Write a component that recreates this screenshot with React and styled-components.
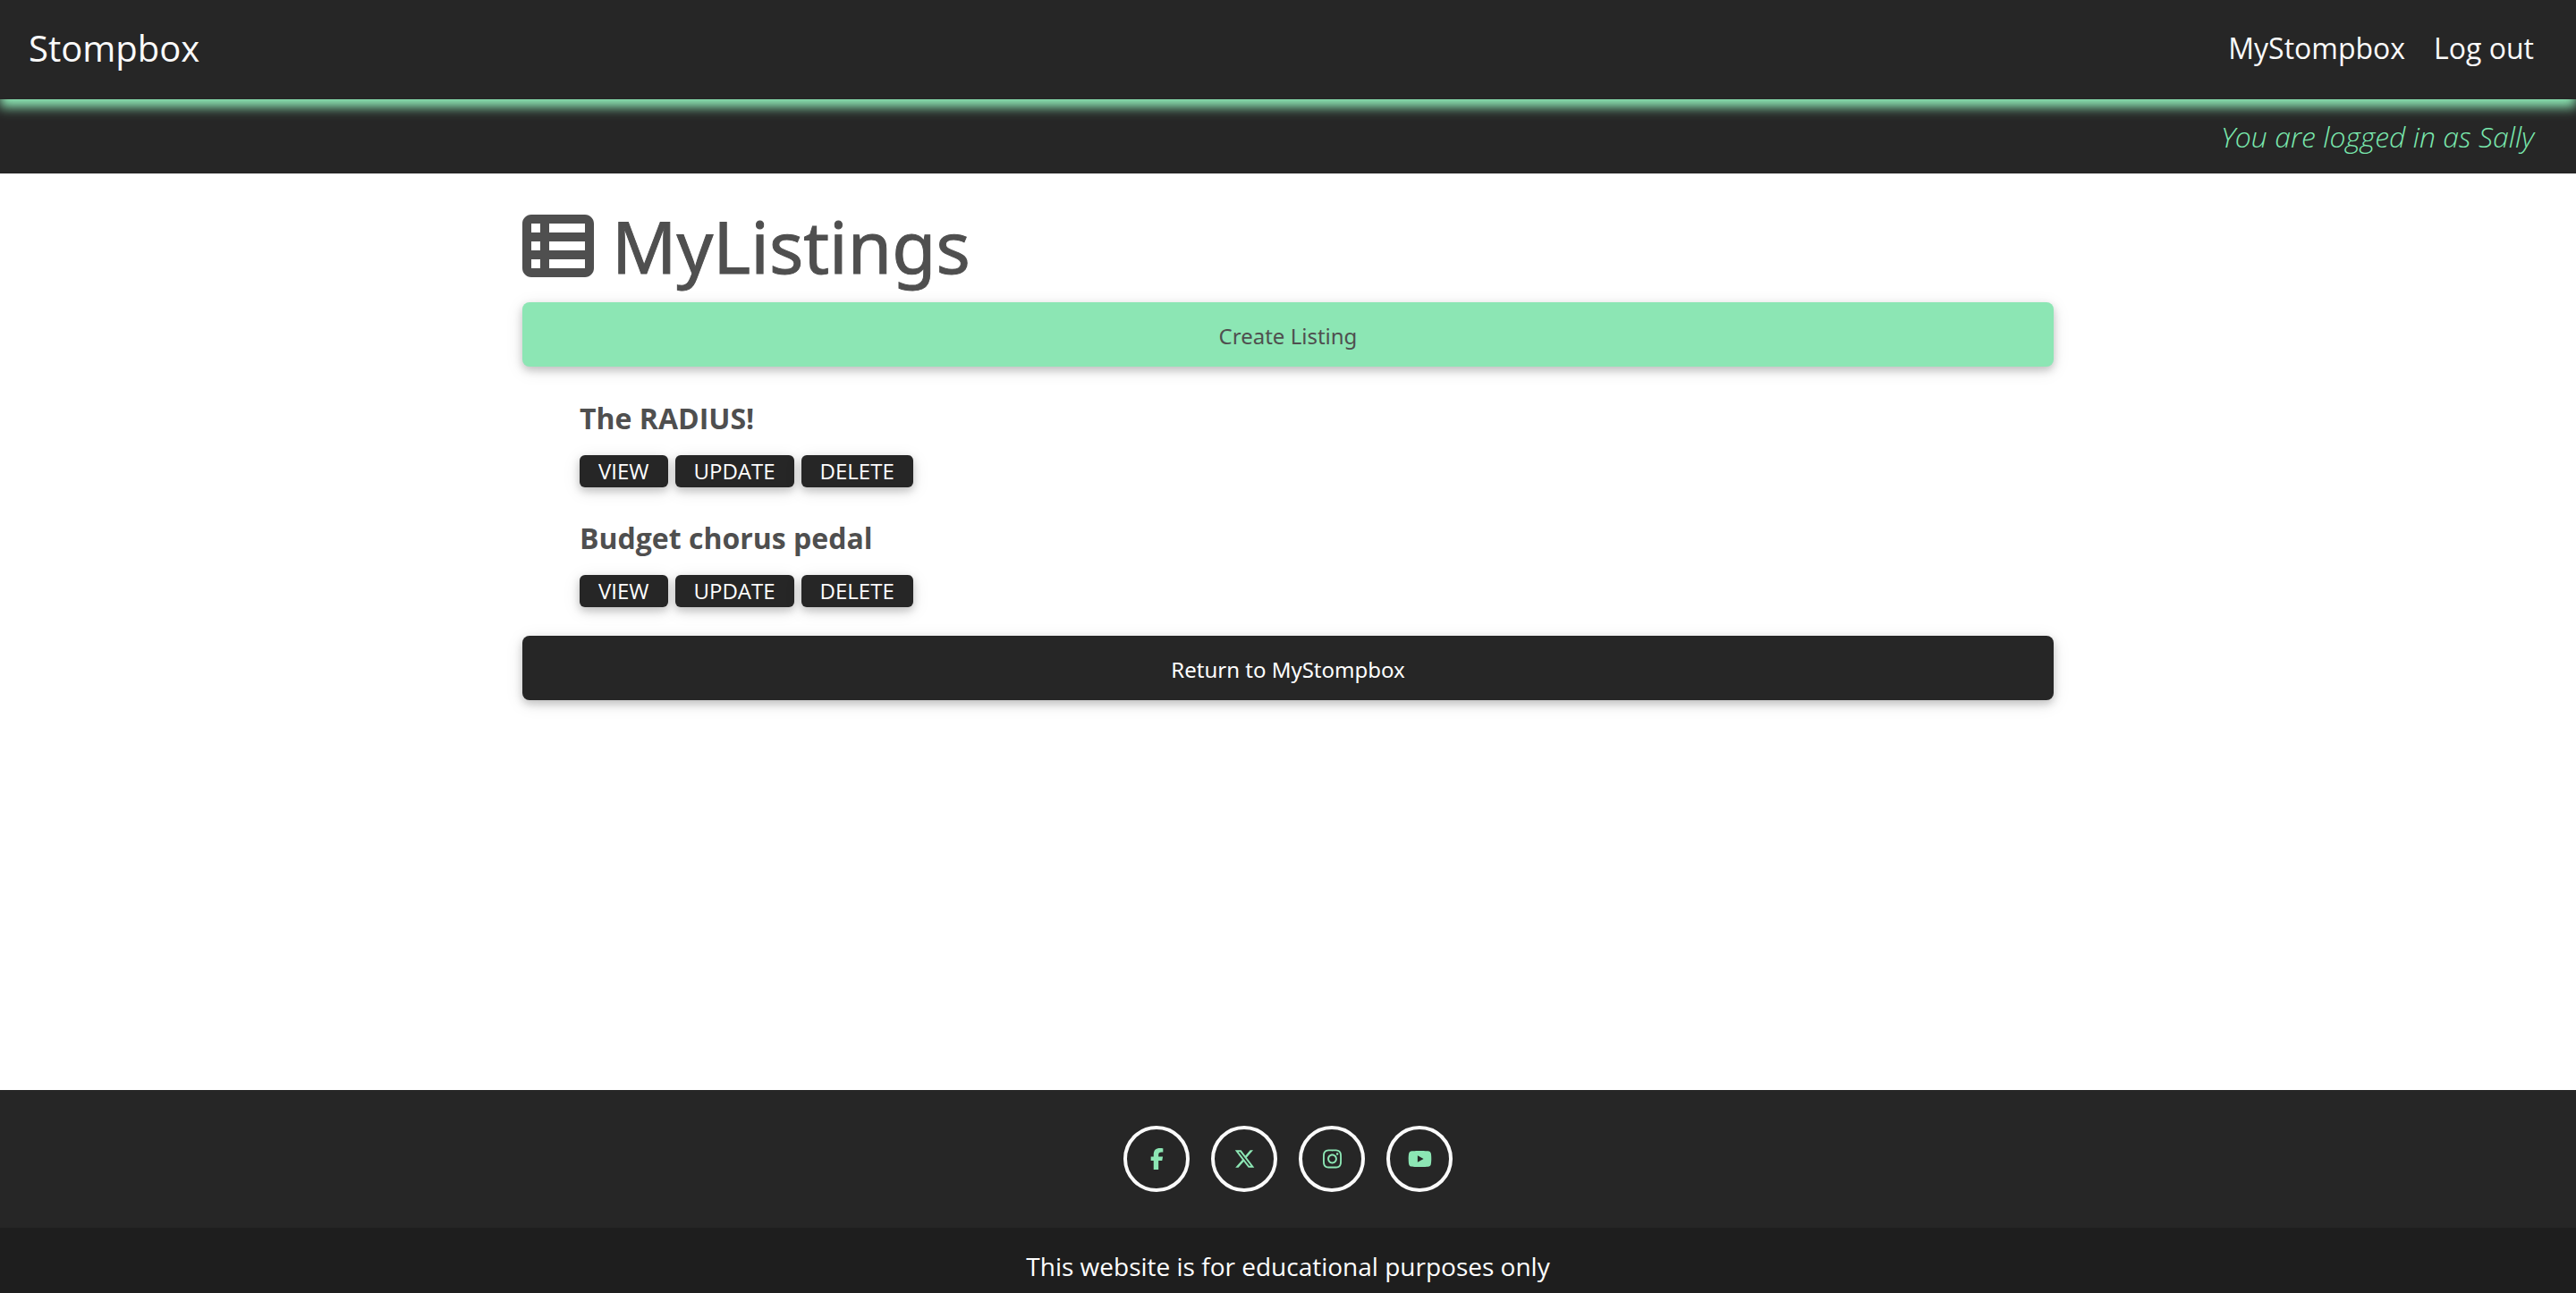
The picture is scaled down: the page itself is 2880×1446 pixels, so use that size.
import React from "react";
import styled, { createGlobalStyle, css } from "styled-components";
import {
  FaTableList,
  FaFacebookF,
  FaXTwitter,
  FaInstagram,
  FaYoutube,
} from "react-icons/fa6";

const GlobalStyle = createGlobalStyle`
  *, *::before, *::after { box-sizing: border-box; }
  body {
    margin: 0;
    background: #ffffff;
    color: #4f4f4f;
    font-family: "Open Sans", "Noto Sans", sans-serif;
    font-size: 32px;
    line-height: 48px;
  }
  h1, h2, p, ul { margin: 0; padding: 0; }
  ul { list-style: none; }
  a { color: inherit; text-decoration: none; }
`;

const Page = styled.div`
  display: flex;
  flex-direction: column;
  min-height: 100vh;
`;

const Navbar = styled.header`
  position: relative;
  z-index: 1;
  display: flex;
  align-items: center;
  justify-content: space-between;
  padding: 24px 47px 27px 32px;
  background: #262626;
  color: #fafafa;
  box-shadow: 0 9px 12px #8ce6b4;
`;

const Brand = styled.a`
  font-size: 40px;
  line-height: 60px;
`;

const NavLinks = styled.nav`
  display: flex;
  gap: 32px;
`;

const StatusBar = styled.p`
  padding: 18px 47px 17px;
  background: #262626;
  color: #7ae8ae;
  font-weight: 300;
  font-style: italic;
  text-align: right;
`;

const Main = styled.main`
  flex: 1;
  width: 100%;
  max-width: 1760px;
  margin: 0 auto;
  padding: 33px 24px 32px;
`;

const Title = styled.h1`
  display: flex;
  align-items: center;
  gap: 20px;
  margin-bottom: 15px;
  font-family: "Noto Sans", "Open Sans", sans-serif;
  font-size: 80px;
  font-weight: 400;
  line-height: 96px;
  -webkit-text-stroke: 1px currentColor;
`;

const raised = css`
  border: 0;
  font-size: 24px;
  font-weight: 400;
  text-align: center;
  cursor: pointer;
  box-shadow: 0 4px 10px rgba(0, 0, 0, 0.2), 0 4px 20px rgba(0, 0, 0, 0.1);
`;

const WideLink = styled.a`
  ${raised}
  display: block;
  padding: 20px 24px 16px;
  border-radius: 8px;
  font-family: "Noto Sans", "Open Sans", sans-serif;
  line-height: 36px;
  background: ${(p) => (p.$accent ? "#8ce6b4" : "#262626")};
  color: ${(p) => (p.$accent ? "#4f4f4f" : "#ffffff")};
`;

const Listings = styled.ul`
  display: grid;
  gap: 33px;
  padding: 34px 64px 32px;
`;

const ListingName = styled.h2`
  margin-bottom: 17px;
  font-size: 32px;
  font-weight: 700;
  line-height: 48px;
`;

const Actions = styled.div`
  display: flex;
  gap: 8px;
`;

const ActionButton = styled.button`
  ${raised}
  padding: 0 21px;
  border-radius: 6px;
  font-family: inherit;
  line-height: 36px;
  text-transform: uppercase;
  background: #262626;
  color: #ffffff;
`;

const Footer = styled.footer`
  background: #262626;
  color: #ffffff;
  text-align: center;
`;

const SocialList = styled.ul`
  display: flex;
  justify-content: center;
  gap: 24px;
  padding: 40px;
`;

const SocialLink = styled.a`
  display: flex;
  align-items: center;
  justify-content: center;
  width: 74px;
  height: 74px;
  border: 4px solid #fafafa;
  border-radius: 50%;
  color: #8ce6b4;

  svg {
    width: 27px;
    height: 24px;
  }
`;

const Notice = styled.p`
  padding: 19px 16px 6px;
  background: #1e1e1e;
  font-size: 28px;
`;

const listings = ["The RADIUS!", "Budget chorus pedal"];
const actions = ["View", "Update", "Delete"];
const socials = [
  { name: "Facebook", Icon: FaFacebookF },
  { name: "X", Icon: FaXTwitter },
  { name: "Instagram", Icon: FaInstagram },
  { name: "YouTube", Icon: FaYoutube },
];

export default function App() {
  return (
    <Page>
      <GlobalStyle />
      <Navbar>
        <Brand href="#home">Stompbox</Brand>
        <NavLinks>
          <a href="#mystompbox">MyStompbox</a>
          <a href="#logout">Log out</a>
        </NavLinks>
      </Navbar>
      <StatusBar>You are logged in as Sally</StatusBar>
      <Main>
        <Title>
          <FaTableList aria-hidden="true" />
          MyListings
        </Title>
        <WideLink href="#create" $accent>
          Create Listing
        </WideLink>
        <Listings>
          {listings.map((name) => (
            <li key={name}>
              <ListingName>{name}</ListingName>
              <Actions>
                {actions.map((action) => (
                  <ActionButton key={action} type="button">
                    {action}
                  </ActionButton>
                ))}
              </Actions>
            </li>
          ))}
        </Listings>
        <WideLink href="#mystompbox">Return to MyStompbox</WideLink>
      </Main>
      <Footer>
        <SocialList>
          {socials.map(({ name, Icon }) => (
            <li key={name}>
              <SocialLink href={`#${name.toLowerCase()}`} aria-label={name}>
                <Icon aria-hidden="true" />
              </SocialLink>
            </li>
          ))}
        </SocialList>
        <Notice>This website is for educational purposes only</Notice>
      </Footer>
    </Page>
  );
}
